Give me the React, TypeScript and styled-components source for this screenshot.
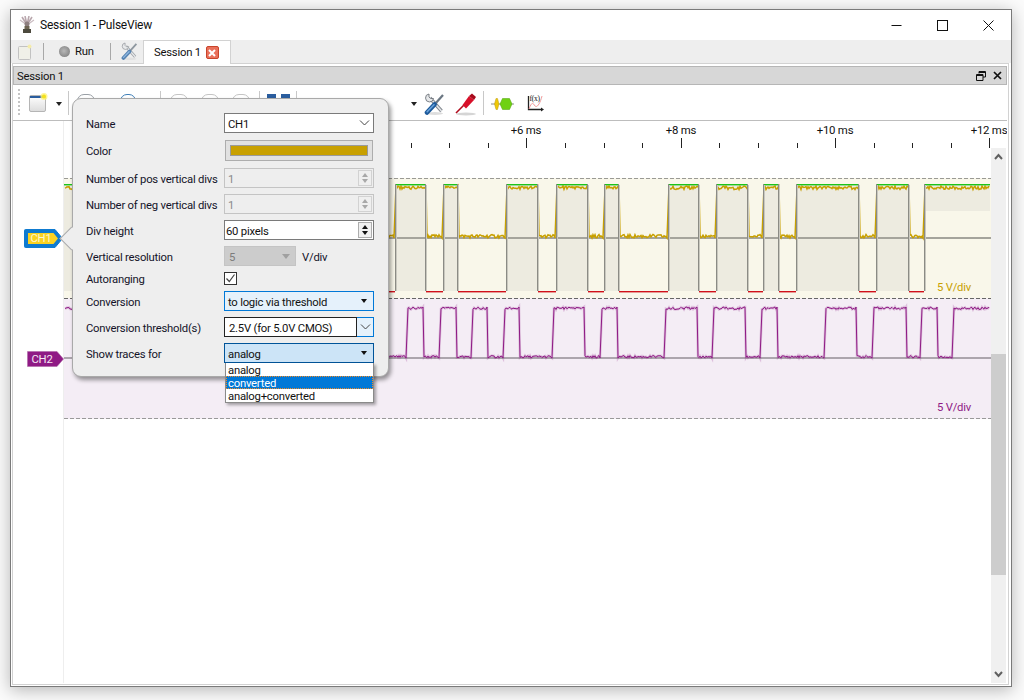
import { FC } from 'react';
import styled, { createGlobalStyle } from 'styled-components';

const FONT = 'Roboto, "Noto Sans", sans-serif';
const FONT_SIZE = 11.3;

const GlobalStyle = createGlobalStyle`
  html, body {
    margin: 0;
    padding: 0;
    background: #fbfbfb;
    font-family: ${FONT};
    font-size: ${FONT_SIZE}px;
    letter-spacing: -0.23px;
    color: #111;
  }
`;

// screen x of the pulses, read off the reference; the plot starts at x=64
const PLOT_X = 64;
const CH1_HIGHS = [
  [64, 90], [395, 426], [443, 458], [506, 538], [556, 588], [604, 619],
  [668, 699], [716, 748], [763, 779], [796, 859], [876, 909], [924, 990],
];
const CH2_HIGHS = [
  [64, 80], [407, 423], [440, 456], [472, 487], [504, 519], [553, 584],
  [601, 617], [665, 697], [713, 745], [761, 777], [825, 856], [873, 906],
  [921, 937], [953, 990],
];

const noise = (i: number) => {
  const v = Math.sin(i * 12.9898) * 43758.5453;
  return v - Math.floor(v);
};

const analogPath = (highs: number[][], top: number, low: number, amp: number, slant: number) => {
  let x = 0;
  const points: string[] = [];
  highs.forEach(([a, b]) => {
    const x0 = a - PLOT_X;
    const x1 = b - PLOT_X;
    for (let i = x; i < x0 - 1; i += 1) {
      points.push(`${i},${(low - noise(i) * amp).toFixed(1)}`);
    }
    if (x0 > 0) points.push(`${x0 - slant},${low}`);
    for (let i = x0 + 1; i < x1; i += 1) {
      points.push(`${i},${(top + noise(i + 500) * amp).toFixed(1)}`);
    }
    if (x1 < 926) points.push(`${x1 + slant - 1},${top}`);
    x = x1 + 1;
  });
  return `M${points.join(' L')}`;
};

const Ch1Wave: FC = () => {
  const wave = analogPath(CH1_HIGHS, 8, 60, 3.5, 1);
  return (
    <TraceSvg width={927} height={120} viewBox="0 0 927 120">
      {CH1_HIGHS.map(([a, b], i) => {
        const last = i === CH1_HIGHS.length - 1;
        return (
          <g key={a}>
            <rect x={a - PLOT_X} y={6} width={b - a} height={last ? 27 : 107} fill="#edebe0" />
            {!last && (
              <rect x={b - PLOT_X} y={113} width={CH1_HIGHS[i + 1][0] - b} height={1.4} fill="#d0101a" />
            )}
          </g>
        );
      })}
      <rect x={0} y={59} width={927} height={2} fill="#a5a49c" />
      <path d={wave} fill="none" stroke="#c8a000" strokeWidth={1.5} />
      {CH1_HIGHS.map(([a, b], i) => {
        const x = a - PLOT_X;
        const w = b - a;
        const last = i === CH1_HIGHS.length - 1;
        return (
          <g key={a}>
            <rect x={x} y={6} width={w} height={1.4} fill="#1cc41a" />
            {i > 0 && (
              <>
                <rect x={x} y={6} width={1} height={107} fill="#8b8b85" />
                <rect x={x + 1} y={7} width={1} height={106} fill="#c9c8bf" />
              </>
            )}
            {!last && (
              <>
                <rect x={x + w - 1} y={6} width={1} height={107} fill="#8b8b85" />
                <rect x={x + w} y={7} width={1} height={106} fill="#c9c8bf" />
              </>
            )}
          </g>
        );
      })}
      <line x1={0} x2={927} y1={0.5} y2={0.5} stroke="#9a9a94" strokeDasharray="4 2" />
      <text x={873} y={113} fill="#c8a000" fontSize={FONT_SIZE} fontFamily={FONT}>5 V/div</text>
    </TraceSvg>
  );
};

const Ch2Wave: FC = () => {
  const wave = analogPath(CH2_HIGHS, 9, 60, 2.5, 1);
  return (
    <TraceSvg width={927} height={121} viewBox="0 0 927 121">
      <rect x={0} y={59} width={927} height={2} fill="#aca5ad" />
      <path d={wave} fill="none" stroke="#8f1a85" strokeWidth={2.5} opacity={0.22} />
      <path d={wave} fill="none" stroke="#8f1a85" strokeWidth={1} />
      <line x1={0} x2={927} y1={0.5} y2={0.5} stroke="#666" strokeDasharray="4 2" />
      <line x1={0} x2={927} y1={120.5} y2={120.5} stroke="#999" strokeDasharray="4 2" />
      <text x={873} y={113} fill="#8f1a85" fontSize={FONT_SIZE} fontFamily={FONT}>5 V/div</text>
    </TraceSvg>
  );
};

const RulerAxis: FC = () => {
  const major = [
    { x: 526, t: '+6 ms' },
    { x: 681, t: '+8 ms' },
    { x: 835, t: '+10 ms' },
    { x: 989, t: '+12 ms' },
  ];
  const minor = [411, 449, 488, 565, 604, 642, 719, 758, 797, 874, 912, 951];
  return (
    <svg width={994} height={27} viewBox="13 121 994 27" style={{ display: 'block' }}>
      <rect x={63} y={121} width={1} height={27} fill="#eeeeee" />
      {minor.map(x => (
        <rect key={x} x={x} y={143} width={1} height={5} fill="#222" />
      ))}
      {major.map(m => (
        <g key={m.t}>
          <rect x={m.x} y={138} width={1} height={10} fill="#222" />
          <text x={m.x} y={134} textAnchor="middle" fontSize={11.4} fill="#111" fontFamily={FONT}>
            {m.t}
          </text>
        </g>
      ))}
    </svg>
  );
};

const AppLogo: FC = () => (
  <svg width={16} height={18} viewBox="0 0 16 18">
    <path d="M8 9 L3 1 M8 9 L6 0 M8 9 L10 0 M8 9 L13 1" stroke="#b9a7ad" strokeWidth={1.6} />
    <path d="M8 9 L1 4 M8 9 L15 4" stroke="#cbbcc2" strokeWidth={1.2} />
    <circle cx={8} cy={8} r={2.5} fill="#8e7f7f" />
    <rect x={5.5} y={10} width={5} height={3} fill="#6e6452" />
    <rect x={4} y={13} width={8} height={4} fill="#4d4a3e" />
  </svg>
);

const PageIcon: FC = () => (
  <svg width={20} height={20} viewBox="0 0 20 20">
    <defs>
      <linearGradient id="pg" x1="0" y1="0" x2="0" y2="1">
        <stop offset="0" stopColor="#ffffff" />
        <stop offset="1" stopColor="#dcdcdc" />
      </linearGradient>
    </defs>
    <rect x={1.5} y={2.5} width={16} height={16} rx={1.5} fill="url(#pg)" stroke="#b5b5b5" />
    <rect x={2} y={3} width={15} height={2} fill="#2a5d9e" />
    <circle cx={16} cy={3.5} r={3.5} fill="#fff27a" opacity={0.8} />
    <circle cx={16} cy={3.5} r={2} fill="#f3e21d" />
  </svg>
);

const FadedPageIcon: FC = () => (
  <svg width={15} height={16} viewBox="0 0 15 16">
    <rect x={1.5} y={2.5} width={12} height={13} rx={1} fill="#f0f0e8" stroke="#c2c2c2" />
    <circle cx={12.5} cy={2.5} r={2} fill="#f4ecaa" />
  </svg>
);

const ToolsIcon: FC<{ $small?: boolean }> = ({ $small }) => (
  <svg
    width={$small ? 17 : 21}
    height={$small ? 19 : 23}
    viewBox="0 0 21 23"
    opacity={$small ? 0.72 : 1}
  >
    <ellipse cx={11} cy={20.5} rx={8} ry={1.5} fill="#ddd" />
    <path d="M6 5 L17.5 18" stroke="#7f858c" strokeWidth={3.4} />
    <path d="M6 5 L17.5 18" stroke="#e6e8ea" strokeWidth={1.6} />
    <path d="M5 1 A4 4 0 1 0 9.5 5.5 L6.5 5.5 L5 4 Z" fill="#e6e8ea" stroke="#6f757c" strokeWidth={0.9} />
    <path d="M11 11 L19 2" stroke="#6a7682" strokeWidth={2.2} />
    <path d="M3 19.5 L10.5 11.5" stroke="#1d5a9b" strokeWidth={4.6} strokeLinecap="round" />
    <path d="M3.2 18.8 L10 11.8" stroke="#6aa3db" strokeWidth={1.6} strokeLinecap="round" />
  </svg>
);

const ProbeIcon: FC = () => (
  <svg width={22} height={23} viewBox="0 0 22 23">
    <ellipse cx={11} cy={21} rx={10} ry={1.5} fill="#d5d5d5" />
    <path d="M1 20 L9 12" stroke="#b00c1e" strokeWidth={1.6} />
    <path d="M7.5 12 L14 3 L19 7 L11 15.5 Z" fill="#d8102a" />
    <path d="M14 3 L17 0.5 L21 4 L19 7 Z" fill="#a80a1c" />
  </svg>
);

const DecoderIcon: FC = () => (
  <svg width={23} height={14} viewBox="0 0 23 14">
    <line x1={0} x2={23} y1={7} y2={7} stroke="#8a8a8a" />
    <path d="M3.5 7 L5 1.5 L6.5 1.5 L8 7 L6.5 12.5 L5 12.5 Z" fill="#f0c808" stroke="#b99a10" strokeWidth={0.5} />
    <path d="M9 7 L11.5 1.5 L18.5 1.5 L21 7 L18.5 12.5 L11.5 12.5 Z" fill="#6fd112" stroke="#4f9e0b" strokeWidth={0.5} />
  </svg>
);

const MathIcon: FC = () => (
  <svg width={18} height={19} viewBox="0 0 18 19">
    <path d="M2.5 2 V15.5 H16" fill="none" stroke="#222" strokeWidth={1.3} />
    <path d="M15 13.5 L18 15.5 L15 17.5 Z" fill="#222" />
    <path d="M3 15 C6 7 7 9 9 12 C11 14 14 10 16 2" fill="none" stroke="#f19a9a" strokeWidth={1} />
    <text x={3.5} y={7} fontSize={7.5} fill="#111" fontFamily="Liberation Serif, serif">f(x)</text>
  </svg>
);

const Chevron: FC = () => (
  <svg width={11} height={6} viewBox="0 0 11 6">
    <path d="M1 0.5 L5.5 5 L10 0.5" fill="none" stroke="#444" strokeWidth={1} />
  </svg>
);

const ScrollChevron: FC<{ $up?: boolean }> = ({ $up }) => (
  <svg width={9} height={7} viewBox="0 0 9 7">
    <path d={$up ? 'M1 6 L4.5 2 L8 6' : 'M1 1 L4.5 5 L8 1'} fill="none" stroke="#606060" strokeWidth={2} />
  </svg>
);

const ChannelBadge: FC<{ name: string; selected?: boolean }> = ({ name, selected }) =>
  selected ? (
    <svg width={41} height={21} viewBox="0 0 41 21">
      <path d="M2.5 1.5 H32 L39.5 10.5 L32 19.5 H2.5 Q1.5 19.5 1.5 18.5 V2.5 Q1.5 1.5 2.5 1.5 Z" fill="#0f7bd0" stroke="#0f7bd0" strokeWidth={1} />
      <path d="M5 5 H30.5 L35 10.5 L30.5 16 H5 Z" fill="#fcd220" />
      <text x={18} y={14.4} textAnchor="middle" fontSize={FONT_SIZE} fill="#fdf7d0" fontFamily={FONT}>{name}</text>
    </svg>
  ) : (
    <svg width={37} height={16} viewBox="0 0 37 16">
      <path d="M0.5 0.5 H30 L36.5 8 L30 15.5 H0.5 Z" fill="#8f1a85" stroke="#b06aa8" strokeWidth={0.6} />
      <text x={15} y={12} textAnchor="middle" fontSize={FONT_SIZE} fill="#f3e5f1" fontFamily={FONT}>{name}</text>
    </svg>
  );

const App: FC = () => (
  <>
    <GlobalStyle />
    <Screen>
      <Window>
        <TitleBar>
          <AppLogo />
          <TitleText>Session 1 - PulseView</TitleText>
          <WindowButtons>
            <svg width={11} height={11} viewBox="0 0 11 11"><path d="M0.5 5.5 H10.5" stroke="#111" /></svg>
            <svg width={11} height={11} viewBox="0 0 11 11"><rect x={0.5} y={0.5} width={10} height={10} fill="none" stroke="#111" /></svg>
            <svg width={11} height={11} viewBox="0 0 11 11"><path d="M0.5 0.5 L10.5 10.5 M10.5 0.5 L0.5 10.5" stroke="#111" /></svg>
          </WindowButtons>
        </TitleBar>

        <AppBar>
          <BarItem $ml={6}><FadedPageIcon /></BarItem>
          <BarSep $ml={11} />
          <RunLed />
          <RunLabel>Run</RunLabel>
          <BarSep $ml={15} />
          <BarItem $ml={10}><ToolsIcon $small /></BarItem>
          <Tab>
            Session 1
            <TabClose>
              <svg width={8} height={8} viewBox="0 0 8 8"><path d="M1 1 L7 7 M7 1 L1 7" stroke="#fff" strokeWidth={2} /></svg>
            </TabClose>
          </Tab>
        </AppBar>

        <DockFrame>
          <DockTitle>
            <Txt>Session 1</Txt>
            <DockButtons>
              <svg width={10} height={10} viewBox="0 0 10 10">
                <path d="M3 2.5 V0.5 H9.5 V6 H7 M3 1.5 H9.5 M0.5 3.5 H7 V9.5 H0.5 Z M0.5 4.5 H7" fill="none" stroke="#111" />
              </svg>
              <svg width={9} height={9} viewBox="0 0 9 9"><path d="M1 1 L8 8 M8 1 L1 8" stroke="#111" strokeWidth={1.7} /></svg>
            </DockButtons>
          </DockTitle>

          <Toolbar>
            <Grip />
            <ToolSlot $ml={8}><PageIcon /></ToolSlot>
            <Caret $ml={8} />
            <ToolSep $ml={6} />
            <GhostIcon $ml={8} $w={18} $color="#9aa0a6" />
            <GhostIcon $ml={25} $w={16} $color="#3f7fb8" />
            <ToolSep $ml={24} />
            <GhostIcon $ml={9} $w={18} />
            <GhostIcon $ml={13} $w={18} />
            <GhostIcon $ml={13} $w={18} />
            <ToolSep $ml={9} />
            <BlueBlock $ml={7} />
            <BlueBlock $ml={5} />
            <ToolSep $ml={6} />
            <Caret $ml={114} />
            <ToolSlot $ml={7} $mt={3}><ToolsIcon /></ToolSlot>
            <ToolSlot $ml={10} $mt={3}><ProbeIcon /></ToolSlot>
            <ToolSep $ml={6} />
            <ToolSlot $ml={7} $mt={3}><DecoderIcon /></ToolSlot>
            <ToolSlot $ml={12} $mt={2}><MathIcon /></ToolSlot>
          </Toolbar>

          <RulerRow><RulerAxis /></RulerRow>

          <ViewBody>
            <TraceColumn>
              <TraceRow $fill={false} $h={30}>
                <Gutter />
              </TraceRow>
              <TraceRow $fill={false} $h={120}>
                <Gutter $pad={50}><ChannelBadge name="CH1" selected /></Gutter>
                <TracePanel $bg="#f9f7ea"><Ch1Wave /></TracePanel>
              </TraceRow>
              <TraceRow $fill={false} $h={121}>
                <Gutter $pad={53}><ChannelBadge name="CH2" /></Gutter>
                <TracePanel $bg="#f4edf5"><Ch2Wave /></TracePanel>
              </TraceRow>
              <TraceRow $fill>
                <Gutter />
              </TraceRow>
            </TraceColumn>
            <Scrollbar>
              <ScrollEnd><ScrollChevron $up /></ScrollEnd>
              <ScrollTrack><ScrollThumb /></ScrollTrack>
              <ScrollEnd><ScrollChevron /></ScrollEnd>
            </Scrollbar>
          </ViewBody>
        </DockFrame>

        <Popover>
          <PopoverArrow />
          <Form>
            <FieldLabel>Name</FieldLabel>
            <Field><Txt>CH1</Txt><FieldEnd><Chevron /></FieldEnd></Field>

            <FieldLabel>Color</FieldLabel>
            <ColorButton><ColorSwatch /></ColorButton>

            <FieldLabel>Number of pos vertical divs</FieldLabel>
            <Field $disabled><Txt>1</Txt><SpinBox $disabled><SpinUp $disabled /><SpinDown $disabled /></SpinBox></Field>

            <FieldLabel>Number of neg vertical divs</FieldLabel>
            <Field $disabled><Txt>1</Txt><SpinBox $disabled><SpinUp $disabled /><SpinDown $disabled /></SpinBox></Field>

            <FieldLabel>Div height</FieldLabel>
            <Field $tight><Txt>60 pixels</Txt><SpinBox><SpinUp /><SpinDown /></SpinBox></Field>

            <FieldLabel>Vertical resolution</FieldLabel>
            <ResolutionCell>
              <ResolutionCombo><Txt>5</Txt><DisabledCaret /></ResolutionCombo>
              <Txt>V/div</Txt>
            </ResolutionCell>

            <FieldLabel>Autoranging</FieldLabel>
            <Checkbox>
              <svg width={11} height={11} viewBox="0 0 11 11"><path d="M1.5 5.5 L4.3 8.5 L9.5 1.5" fill="none" stroke="#444" strokeWidth={1.2} /></svg>
            </Checkbox>

            <FieldLabel>Conversion</FieldLabel>
            <Combo $bg="#e5f1fb" $border="#0078d7"><Txt>to logic via threshold</Txt><ComboCaret /></Combo>

            <FieldLabel>Conversion threshold(s)</FieldLabel>
            <EditCombo>
              <EditPart><Txt>2.5V (for 5.0V CMOS)</Txt></EditPart>
              <EditButton><Chevron /></EditButton>
            </EditCombo>

            <FieldLabel>Show traces for</FieldLabel>
            <ComboWrap>
              <Combo $bg="#cce4f7" $border="#005499"><Txt>analog</Txt><ComboCaret /></Combo>
              <DropList>
                <DropItem>analog</DropItem>
                <DropItem $active>converted</DropItem>
                <DropItem>analog+converted</DropItem>
              </DropList>
            </ComboWrap>
          </Form>
        </Popover>
      </Window>
    </Screen>
  </>
);

const Screen = styled.div`
  width: 1024px;
  height: 700px;
  padding: 9px 0 0 10px;
  box-sizing: border-box;
  overflow: hidden;
`;

const Window = styled.div`
  position: relative;
  width: 1002px;
  height: 678px;
  box-sizing: border-box;
  border: 1px solid #7a7a7a;
  background: #fff;
  box-shadow: 0 3px 16px rgba(0, 0, 0, 0.28);
  display: flex;
  flex-flow: column;
`;

const Txt = styled.span`
  padding-top: 2px;
  line-height: 13px;
  white-space: nowrap;
`;

const TitleBar = styled.div`
  height: 30px;
  flex: none;
  display: flex;
  align-items: center;
  padding-left: 8px;
  background: #fff;
`;

const TitleText = styled.span`
  margin-left: 5px;
  font-size: 12px;
`;

const WindowButtons = styled.div`
  margin-left: auto;
  margin-right: 17px;
  display: flex;
  gap: 35px;
`;

const AppBar = styled.div`
  height: 23px;
  flex: none;
  display: flex;
  align-items: center;
  background: #eeeeee;
`;

const BarItem = styled.div<{ $ml: number }>`
  margin-left: ${p => p.$ml}px;
  display: flex;
`;

const BarSep = styled.div<{ $ml: number }>`
  margin-left: ${p => p.$ml}px;
  width: 1px;
  height: 17px;
  background: #a8a8a8;
`;

const RunLed = styled.div`
  margin-left: 15px;
  width: 11px;
  height: 11px;
  border-radius: 50%;
  background: radial-gradient(circle at 45% 45%, #b8b8b8, #8a8a8a 70%, #777);
`;

const RunLabel = styled.span`
  margin-left: 5px;
  width: 20px;
`;

const Tab = styled.div`
  margin-left: 5px;
  align-self: flex-start;
  height: 24px;
  width: 88px;
  box-sizing: border-box;
  padding: 0 0 0 10px;
  display: flex;
  align-items: center;
  gap: 5px;
  background: #fff;
  border: 1px solid #d2d2d2;
  border-bottom: none;
  position: relative;
  z-index: 1;
`;

const TabClose = styled.span`
  width: 13px;
  height: 13px;
  box-sizing: border-box;
  border: 1px solid #c9442a;
  border-radius: 2px;
  background: #e9705a;
  display: flex;
  align-items: center;
  justify-content: center;
`;

const DockFrame = styled.div`
  flex: 1;
  min-height: 0;
  margin: 0 2px 1px 1px;
  padding: 2px 1px 1px 0;
  border: 1px solid #d2d2d2;
  display: flex;
  flex-flow: column;
  background: #fff;
`;

const DockTitle = styled.div`
  height: 19px;
  flex: none;
  box-sizing: border-box;
  border: 1px solid #b6b6b6;
  background: #d7d7d7;
  padding: 0 4px 0 3px;
  display: flex;
  align-items: center;
`;

const DockButtons = styled.div`
  margin-left: auto;
  display: flex;
  align-items: center;
  gap: 7px;
`;

const Toolbar = styled.div`
  height: 36px;
  flex: none;
  box-sizing: border-box;
  border-bottom: 1px solid #bdbdbd;
  display: flex;
  align-items: center;
  padding-left: 5px;
`;

const Grip = styled.div`
  width: 2px;
  height: 27px;
  background: repeating-linear-gradient(to bottom, #c4c4c4 0 2px, transparent 2px 4px);
`;

const ToolSlot = styled.div<{ $ml: number; $mt?: number }>`
  margin-left: ${p => p.$ml}px;
  margin-top: ${p => p.$mt ?? 0}px;
  display: flex;
`;

const Caret = styled.div<{ $ml: number }>`
  margin-left: ${p => p.$ml}px;
  width: 0;
  height: 0;
  border-left: 3.5px solid transparent;
  border-right: 3.5px solid transparent;
  border-top: 4px solid #222;
  margin-top: 2px;
`;

const ToolSep = styled.div<{ $ml: number }>`
  margin-left: ${p => p.$ml}px;
  width: 1px;
  height: 24px;
  background: #c8c8c8;
`;

const GhostIcon = styled.div<{ $ml: number; $w: number; $color?: string }>`
  margin-left: ${p => p.$ml}px;
  width: ${p => p.$w}px;
  height: 18px;
  box-sizing: border-box;
  border: 1px solid ${p => p.$color ?? '#c4c4c4'};
  border-radius: 7px 7px 2px 2px;
`;

const BlueBlock = styled.div<{ $ml: number }>`
  margin-left: ${p => p.$ml}px;
  width: 9px;
  height: 18px;
  background: #2a5d9e;
`;

const RulerRow = styled.div`
  height: 27px;
  flex: none;
`;

const ViewBody = styled.div`
  flex: 1;
  min-height: 0;
  display: flex;
`;

const TraceColumn = styled.div`
  flex: none;
  width: 978px;
  display: flex;
  flex-flow: column;
`;

const TraceRow = styled.div<{ $fill: boolean; $h?: number }>`
  display: flex;
  flex: ${p => (p.$fill ? '1' : 'none')};
  height: ${p => (p.$h ? `${p.$h}px` : 'auto')};
`;

const Gutter = styled.div<{ $pad?: number }>`
  flex: none;
  width: 51px;
  box-sizing: border-box;
  border-right: 1px solid #eeeeee;
  padding-top: ${p => p.$pad ?? 0}px;
  display: flex;
  justify-content: flex-end;
  align-items: flex-start;
  svg {
    margin-right: -1px;
    position: relative;
  }
`;

const TracePanel = styled.div<{ $bg: string }>`
  flex: 1;
  background: ${p => p.$bg};
`;

const TraceSvg = styled.svg`
  display: block;
`;

const Scrollbar = styled.div`
  flex: none;
  width: 15px;
  display: flex;
  flex-flow: column;
  background: #f0f0f0;
`;

const ScrollEnd = styled.div`
  height: 17px;
  flex: none;
  display: flex;
  align-items: center;
  justify-content: center;
`;

const ScrollTrack = styled.div`
  flex: 1;
  padding-top: 189px;
`;

const ScrollThumb = styled.div`
  height: 221px;
  background: #cdcdcd;
`;

const Popover = styled.div`
  position: absolute;
  left: 61px;
  top: 88px;
  width: 317px;
  height: 279px;
  box-sizing: border-box;
  background: #eeeeee;
  border: 1px solid #a9a9a9;
  border-radius: 9px;
  box-shadow: 2px 3px 4px rgba(0, 0, 0, 0.4);
  padding: 14px 0 0 13px;
  z-index: 2;
`;

const PopoverArrow = styled.div`
  position: absolute;
  left: -10px;
  top: 131px;
  width: 17px;
  height: 17px;
  box-sizing: border-box;
  background: #eeeeee;
  border-left: 1px solid #a9a9a9;
  border-bottom: 1px solid #a9a9a9;
  transform: rotate(45deg);
`;

const Form = styled.div`
  position: relative;
  display: grid;
  grid-template-columns: 138px 150px;
  row-gap: 6px;
  align-items: center;
`;

const FieldLabel = styled.div`
  white-space: nowrap;
  color: #14142a;
  line-height: 15px;
  margin-bottom: -2px;
`;

const Field = styled.div<{ $disabled?: boolean; $tight?: boolean }>`
  height: 20px;
  box-sizing: border-box;
  border: 1px solid ${p => (p.$disabled ? '#c4c4c4' : '#7a7a7a')};
  background: ${p => (p.$disabled ? '#eeeeee' : '#fff')};
  color: ${p => (p.$disabled ? '#8a8a8a' : '#111')};
  padding-left: ${p => (p.$tight ? 1 : 3)}px;
  display: flex;
  align-items: center;
  justify-content: space-between;
`;

const FieldEnd = styled.span`
  width: 17px;
  display: flex;
  justify-content: center;
`;

const ColorButton = styled.div`
  margin: 1px;
  height: 21px;
  box-sizing: border-box;
  border: 1px solid #adadad;
  background: #e1e1e1;
  padding: 5px;
`;

const ColorSwatch = styled.div`
  height: 9px;
  background: #c8a000;
  outline: 1px solid #9a9a9a;
`;

const SpinBox = styled.div<{ $disabled?: boolean }>`
  width: 14px;
  height: 16px;
  margin-right: 1px;
  box-sizing: border-box;
  border: 1px solid ${p => (p.$disabled ? '#d2d2d2' : '#adadad')};
  background: ${p => (p.$disabled ? '#efefef' : '#f0f0f0')};
  display: flex;
  flex-flow: column;
  align-items: center;
  justify-content: center;
  gap: 2px;
`;

const SpinUp = styled.div<{ $disabled?: boolean }>`
  width: 0;
  height: 0;
  border-left: 3.5px solid transparent;
  border-right: 3.5px solid transparent;
  border-bottom: 4px solid ${p => (p.$disabled ? '#a8a8a8' : '#111')};
`;

const SpinDown = styled.div<{ $disabled?: boolean }>`
  width: 0;
  height: 0;
  border-left: 3.5px solid transparent;
  border-right: 3.5px solid transparent;
  border-top: 4px solid ${p => (p.$disabled ? '#a8a8a8' : '#111')};
`;

const ResolutionCell = styled.div`
  display: flex;
  align-items: center;
  gap: 6px;
  color: #14142a;
`;

const ResolutionCombo = styled.div`
  width: 72px;
  height: 20px;
  box-sizing: border-box;
  background: #cccccc;
  border: 1px solid #c4c4c4;
  color: #7c7c7c;
  padding: 0 4px;
  display: flex;
  align-items: center;
  justify-content: space-between;
`;

const DisabledCaret = styled.div`
  width: 0;
  height: 0;
  margin-right: 1px;
  border-left: 4px solid transparent;
  border-right: 4px solid transparent;
  border-top: 5px solid #a0a0a0;
`;

const Checkbox = styled.div`
  width: 13px;
  height: 13px;
  box-sizing: border-box;
  border: 1px solid #333;
  background: #fff;
  display: flex;
  align-items: center;
  justify-content: center;
`;

const ComboWrap = styled.div`
  position: relative;
`;

const Combo = styled.div<{ $bg: string; $border: string }>`
  height: 20px;
  box-sizing: border-box;
  background: ${p => p.$bg};
  border: 1px solid ${p => p.$border};
  padding: 0 6px 0 3px;
  display: flex;
  align-items: center;
  justify-content: space-between;
`;

const ComboCaret = styled.div`
  width: 0;
  height: 0;
  border-left: 3.5px solid transparent;
  border-right: 3.5px solid transparent;
  border-top: 4px solid #111;
`;

const EditCombo = styled.div`
  display: flex;
  height: 20px;
`;

const EditPart = styled.div`
  width: 133px;
  box-sizing: border-box;
  border: 1px solid #222;
  background: #fff;
  padding-left: 4px;
  display: flex;
  align-items: center;
`;

const EditButton = styled.div`
  flex: 1;
  box-sizing: border-box;
  border: 1px solid #0078d7;
  border-left: none;
  background: #e5f1fb;
  display: flex;
  align-items: center;
  justify-content: center;
`;

const DropList = styled.div`
  position: absolute;
  left: 1px;
  right: 0;
  top: 20px;
  box-sizing: border-box;
  background: #fff;
  border: 1px solid #8a8a8a;
  border-top: none;
  box-shadow: 2px 2px 3px rgba(0, 0, 0, 0.35);
  z-index: 3;
`;

const DropItem = styled.div<{ $active?: boolean }>`
  height: 13px;
  line-height: 15px;
  box-sizing: border-box;
  padding-left: 2px;
  background: ${p => (p.$active ? '#0078d7' : '#fff')};
  color: ${p => (p.$active ? '#fff' : '#111')};
  outline: ${p => (p.$active ? '1px dotted #f08a24' : 'none')};
  outline-offset: -1px;
`;

export default App;
